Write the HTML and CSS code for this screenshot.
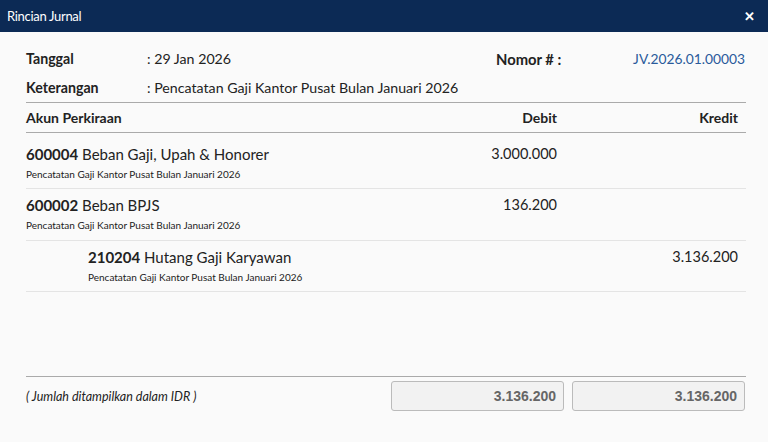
FILE: index.html
```
<!DOCTYPE html>
<html>
<head>
<meta charset="utf-8">
<link rel="stylesheet" href="styles.css">
</head>
<body>
<div class="dialog">
  <div class="titlebar">
    <span class="title">Rincian Jurnal</span>
    <span class="close">&#x2715;</span>
  </div>
  <div class="content">
    <div class="meta">
      <div class="meta-row">
        <span class="label">Tanggal</span>
        <span class="value">: 29 Jan 2026</span>
        <span class="nomor-label">Nomor # :</span>
        <span class="nomor-value">JV.2026.01.00003</span>
      </div>
      <div class="meta-row">
        <span class="label">Keterangan</span>
        <span class="value">: Pencatatan Gaji Kantor Pusat Bulan Januari 2026</span>
      </div>
    </div>
    <div class="table">
      <div class="thead">
        <div class="col-akun">Akun Perkiraan</div>
        <div class="col-debit">Debit</div>
        <div class="col-kredit">Kredit</div>
      </div>
      <div class="tbody">
        <div class="trow">
          <div class="col-akun">
            <div class="acc"><b>600004</b> Beban Gaji, Upah &amp; Honorer</div>
            <div class="desc">Pencatatan Gaji Kantor Pusat Bulan Januari 2026</div>
          </div>
          <div class="col-debit num">3.000.000</div>
          <div class="col-kredit num"></div>
        </div>
        <div class="trow">
          <div class="col-akun">
            <div class="acc"><b>600002</b> Beban BPJS</div>
            <div class="desc">Pencatatan Gaji Kantor Pusat Bulan Januari 2026</div>
          </div>
          <div class="col-debit num">136.200</div>
          <div class="col-kredit num"></div>
        </div>
        <div class="trow last">
          <div class="col-akun indent">
            <div class="acc"><b>210204</b> Hutang Gaji Karyawan</div>
            <div class="desc">Pencatatan Gaji Kantor Pusat Bulan Januari 2026</div>
          </div>
          <div class="col-debit num"></div>
          <div class="col-kredit num">3.136.200</div>
        </div>
      </div>
    </div>
    <div class="spacer"></div>
    <div class="footer">
      <div class="note">( Jumlah ditampilkan dalam IDR )</div>
      <div class="total">3.136.200</div>
      <div class="total">3.136.200</div>
    </div>
  </div>
</div>
</body>
</html>
```
FILE: styles.css
```
* { box-sizing: border-box; }
html, body { margin: 0; padding: 0; }
body {
  width: 768px;
  height: 442px;
  background: #fafafa;
  font-family: "Lato", "Noto Sans", sans-serif;
  color: #222;
  overflow: hidden;
}
.dialog { display: flex; flex-direction: column; height: 442px; }
.titlebar {
  height: 32px;
  background: #0c2a55;
  display: flex;
  align-items: center;
  justify-content: space-between;
  padding: 0 13px 0 7px;
  color: #fff;
}
.title { font-size: 13px; letter-spacing: -0.3px; }
.close { font-size: 13px; font-weight: bold; }
.content {
  flex: 1;
  display: flex;
  flex-direction: column;
  padding: 12px 22px 31px 26px;
}
.meta-row {
  display: flex;
  align-items: center;
  height: 29px;
  font-size: 14.2px;
}
.label { width: 121px; flex-shrink: 0; font-weight: bold; }
.value { width: 349px; flex-shrink: 0; }
.nomor-label { width: 130px; flex-shrink: 0; font-weight: bold; font-size: 14.8px; }
.nomor-value { flex: 1; text-align: right; color: #2a5a9b; font-size: 13.8px; padding-right: 1px; }
.thead {
  display: flex;
  align-items: center;
  height: 31px;
  border-top: 1px solid #aaa;
  border-bottom: 1px solid #aaa;
  font-size: 14px;
  font-weight: bold;
}
.col-akun { flex: 1; }
.col-debit { width: 150px; text-align: right; }
.col-kredit { width: 189px; text-align: right; padding-right: 8px; }
.trow {
  display: flex;
  align-items: flex-start;
  height: 52px;
  padding-top: 6px;
  border-bottom: 1px solid #e4e4e4;
}
.trow:first-child { height: 56px; padding-top: 11px; }
.trow.last { height: 51px; }
.indent { padding-left: 62px; }
.acc { font-size: 15px; line-height: 20px; }
.acc b { font-weight: bold; }
.desc { font-size: 10px; line-height: 16px; margin-top: 2px; }
.num { font-size: 14.5px; line-height: 20px; }
.spacer { flex: 1; }
.footer {
  display: flex;
  align-items: center;
  border-top: 1px solid #aaa;
  padding: 4px 1px 0 0;
  gap: 8px;
}
.note { flex: 1; font-style: italic; font-size: 12.5px; }
.total {
  width: 173px;
  height: 30px;
  border: 1px solid #bbb;
  border-radius: 3px;
  background: #f2f2f2;
  font-family: "Liberation Sans", Arial, sans-serif;
  font-weight: bold;
  font-size: 14px;
  color: #666;
  text-align: right;
  padding: 6px 7px 0 0;
}
```
